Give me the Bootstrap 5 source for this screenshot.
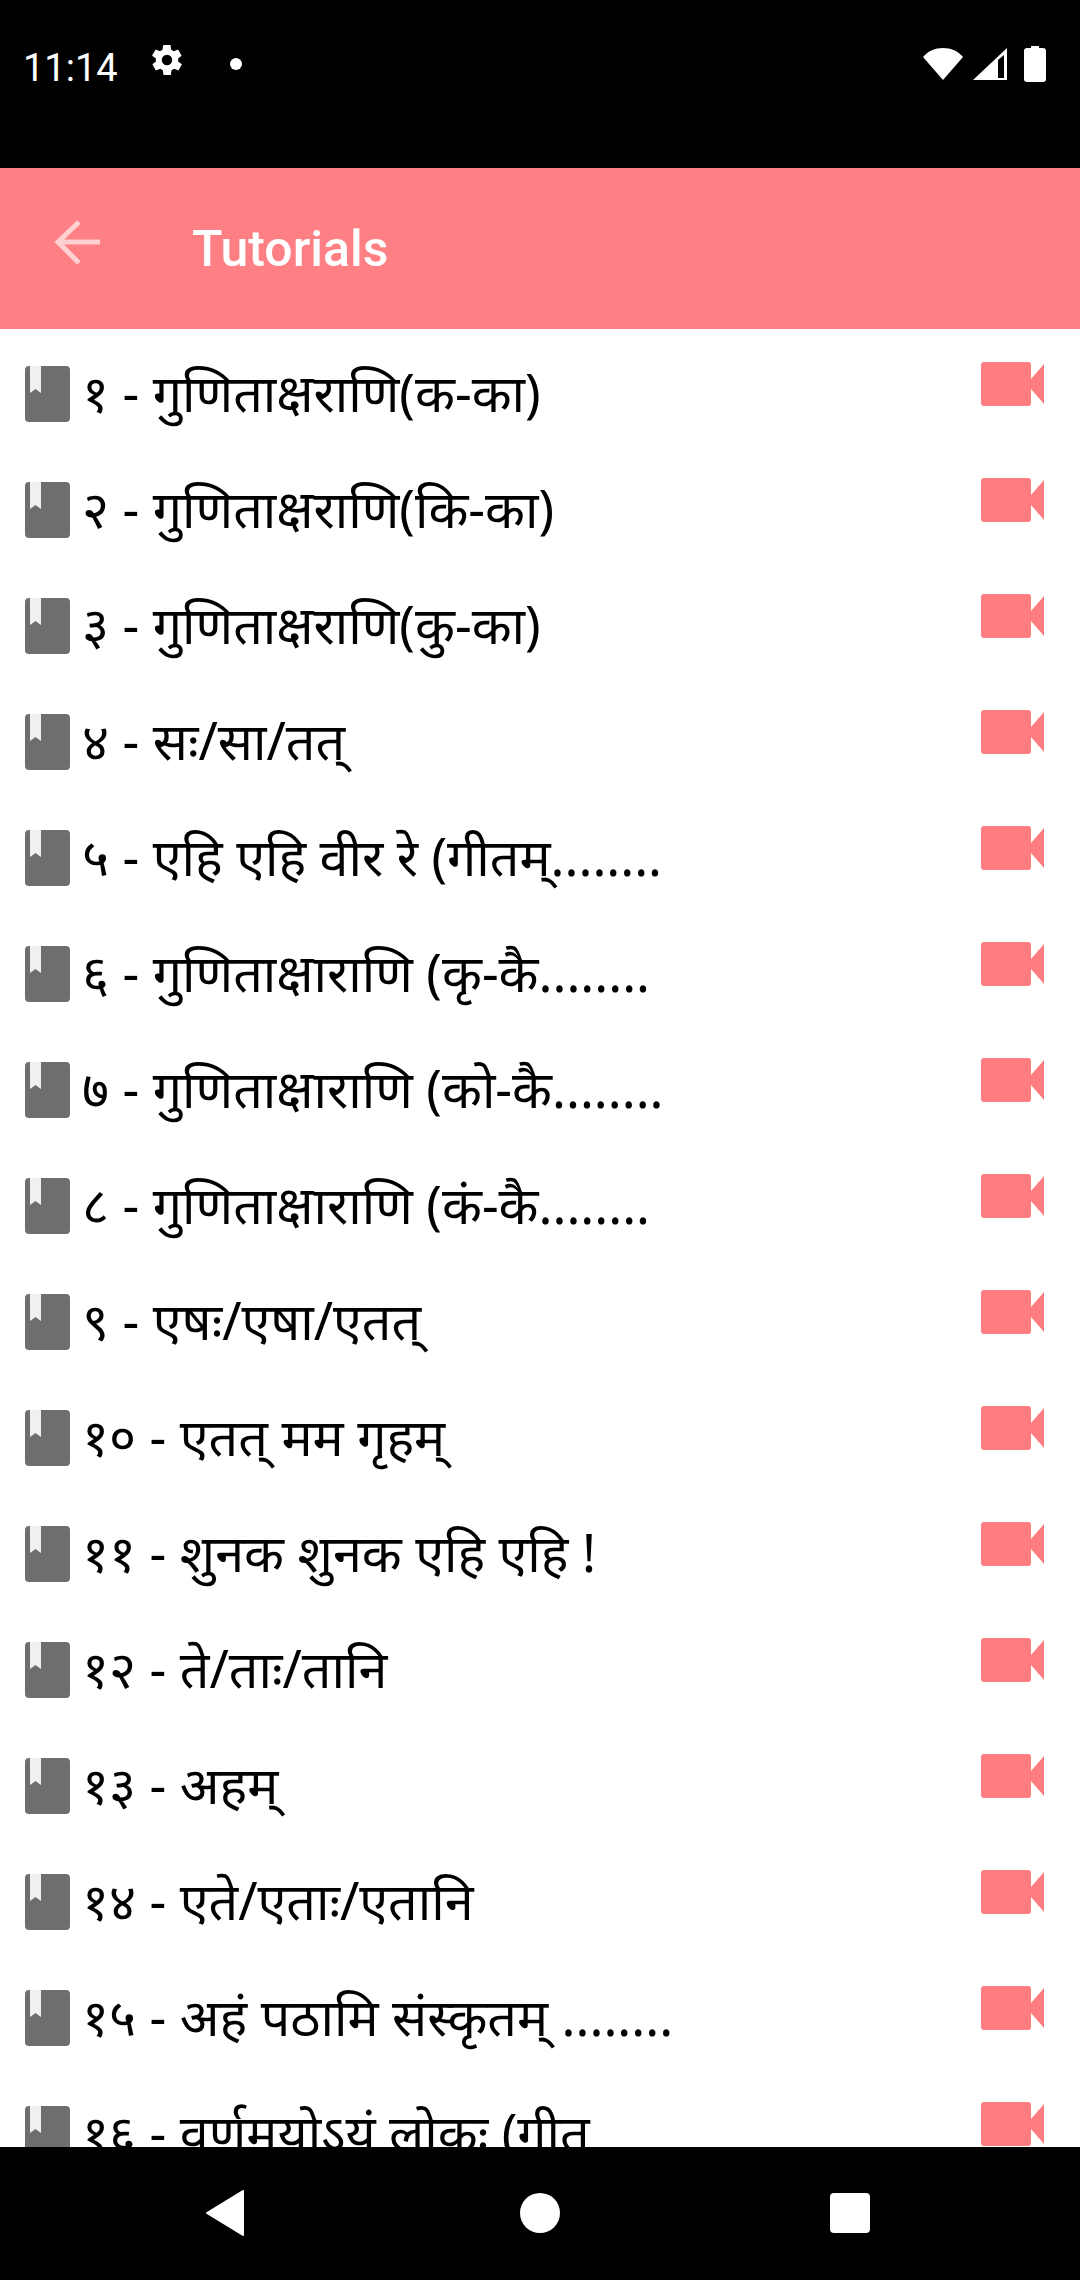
<!DOCTYPE html>
<html lang="hi">
<head>
<meta charset="UTF-8">
<meta name="viewport" content="width=device-width, initial-scale=1.0">
<title>Tutorials</title>
<link href="https://cdn.jsdelivr.net/npm/bootstrap@5.3.0/dist/css/bootstrap.min.css" rel="stylesheet">
<style>
html, body { height: 2280px; overflow: hidden; background: #000; }
.phone-shell { height: 2280px; width: 1080px; }
.status-strip { height: 171px; background: #000; color: #fff; padding: 42px 34px 0 23px; font-family: Roboto, sans-serif; }
.status-time { font-size: 38px; line-height: 52px; font-weight: 400; width: 96px; }
.status-gear { margin-left: 30px; }
.status-dot { width: 12px; height: 12px; background: #fff; border-radius: 50%; margin-left: 45px; }
.app-head { height: 165px; background: #ff8084; color: #fff; }
.head-back { margin: -12px 0 0 54px; }
.head-title { font-family: Roboto, sans-serif; font-weight: 500; font-size: 50px; margin: 0 0 0 92px; line-height: 1; }
.lesson-list { flex: 1 1 auto; min-height: 0; overflow: hidden; background: #fff; border-radius: 0; padding-top: 5px; }
.lesson-row { height: 116px; flex: 0 0 116px; padding: 0 36px 0 25px; border: 0; background: #fff; color: #000; }
.lesson-text { font-family: "Noto Sans", "Liberation Sans", sans-serif; font-size: 52px; line-height: 116px; margin-left: 12px; white-space: nowrap; }
.lesson-book { flex: none; margin-top: 32px; }
.lesson-video { flex: none; margin: 28px 0 0 auto; }
.nav-strip { height: 133px; flex: none; background: #000; padding-bottom: 2px; }
</style>
</head>
<body>
<div class="phone-shell d-flex flex-column">
    <div class="status-strip d-flex align-items-start flex-none">
        <span class="status-time">11:14</span>
        <svg class="status-gear" width="36" height="36" viewBox="0 0 24 24" fill="#fff"><path d="M19.4 13a7.5 7.5 0 0 0 0-2l2.1-1.6a.5.5 0 0 0 .1-.6l-2-3.5a.5.5 0 0 0-.6-.2l-2.5 1a7.300 7.300 0 0 0-1.700-1l-.4-2.700a.5.5 0 0 0-.5-.4h-4a.5.5 0 0 0-.5.4l-.4 2.700a7.300 7.300 0 0 0-1.700 1l-2.500-1a.5.5 0 0 0-.6.2l-2 3.500a.5.5 0 0 0 .1.6L4.600 11a7.500 7.500 0 0 0 0 2l-2.100 1.600a.5.5 0 0 0-.1.6l2 3.500c.1.200.4.300.6.200l2.500-1c.5.400 1.100.7 1.700 1l.4 2.700c0 .2.200.4.500.4h4c.3 0 .5-.2.500-.4l.4-2.700c.6-.3 1.200-.6 1.700-1l2.500 1c.2.100.5 0 .6-.2l2-3.500a.5.5 0 0 0-.1-.6zM12 15.500a3.500 3.500 0 1 1 0-7 3.500 3.500 0 0 1 0 7z"/></svg>
        <span class="status-dot mt-3"></span>
        <div class="ms-auto d-flex align-items-start gap-2 pt-1">
            <svg width="42" height="36" viewBox="0 0 42 36" fill="#fff"><path d="M21 34 1 11C6 5 13 2 21 2s15 3 20 9z"/></svg>
            <svg width="36" height="36" viewBox="0 0 36 36"><path d="M1 34 35 2v32z" fill="#fff"/><path d="M26 14v18h6V9z" fill="#000"/></svg>
            <svg class="ms-2" width="22" height="36" viewBox="0 0 22 36" fill="#fff"><path d="M7 0h8v2h4a3 3 0 0 1 3 3v28a3 3 0 0 1-3 3H3a3 3 0 0 1-3-3V5a3 3 0 0 1 3-3h4z"/></svg>
        </div>
    </div>
    <div class="app-head d-flex align-items-center flex-none">
        <svg class="head-back" width="46" height="46" viewBox="0 0 46 46" fill="none" stroke="#ffd0d2" stroke-width="5"><path d="M46 22H5M25 2 4 22l21 21"/></svg>
        <h1 class="head-title">Tutorials</h1>
    </div>
    <ul class="list-group lesson-list" id="lessons"></ul>
    <div class="nav-strip d-flex align-items-center">
        <svg class="nav-back" width="42" height="46" viewBox="0 0 42 46" fill="#fff" style="margin-left:205px"><path d="M38 1v44L2 23z" stroke="#fff" stroke-linejoin="round" stroke-width="2"/></svg>
        <span class="bg-white rounded-circle" style="width:40px;height:40px;margin-left:273px"></span>
        <span class="bg-white rounded-1" style="width:40px;height:40px;margin-left:270px"></span>
    </div>
</div>
<script>
const lessons = [
    '१ - गुणिताक्षराणि(क-का)',
    '२ - गुणिताक्षराणि(कि-का)',
    '३ - गुणिताक्षराणि(कु-का)',
    '४ - सः/सा/तत्',
    '५ - एहि एहि वीर रे (गीतम्........',
    '६ - गुणिताक्षाराणि (कृ-कै........',
    '७ - गुणिताक्षाराणि (को-कै........',
    '८ - गुणिताक्षाराणि (कं-कै........',
    '९ - एषः/एषा/एतत्',
    '१० - एतत् मम गृहम्',
    '११ - शुनक शुनक एहि एहि !',
    '१२ - ते/ताः/तानि',
    '१३ - अहम्',
    '१४ - एते/एताः/एतानि',
    '१५ - अहं पठामि संस्कृतम् ........',
    '१६ - वर्णमयोऽयं लोकः (गीत'
];
const list = document.getElementById('lessons');
lessons.forEach(title => {
    const li = document.createElement('li');
    li.className = 'list-group-item lesson-row d-flex align-items-start';
    li.innerHTML = `<svg class="lesson-book" width="45" height="56" viewBox="0 0 45 56"><rect width="45" height="56" rx="4" fill="#6e6e6e"/><path d="M5 0h11v27l-5.500-4L5 27z" fill="#f0f0f0"/></svg>` +
        `<span class="lesson-text">${title}</span>` +
        `<svg class="lesson-video" width="64" height="44" viewBox="0 0 64 44"><path d="M4 0h44a3 3 0 0 1 3 3v14L64 2v40L51 27v14a3 3 0 0 1-3 3H4a3 3 0 0 1-3-3V3a3 3 0 0 1 3-3z" fill="#ff7c80"/></svg>`;
    list.appendChild(li);
});
</script>
<script src="https://cdn.jsdelivr.net/npm/bootstrap@5.3.0/dist/js/bootstrap.bundle.min.js"></script>
</body>
</html>
